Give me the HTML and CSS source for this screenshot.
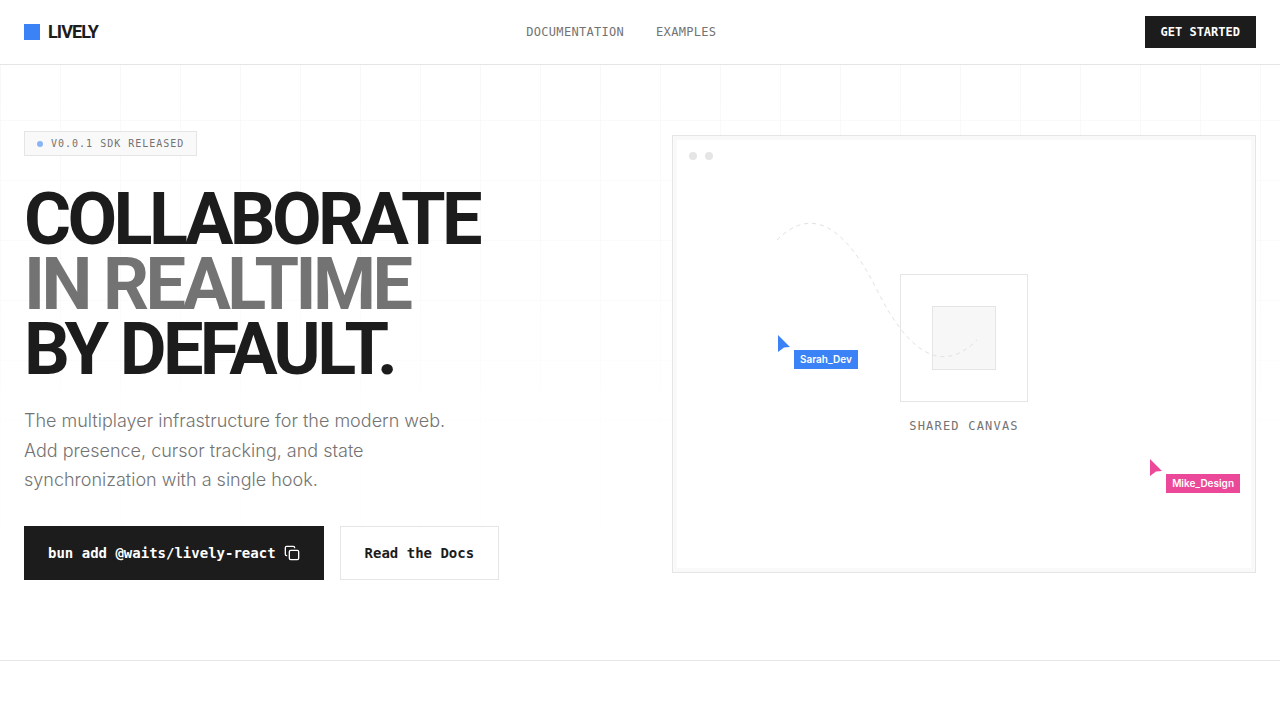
FILE: index.html
```html
<!DOCTYPE html>
<html lang="en">
<head>
<meta charset="utf-8">
<meta name="viewport" content="width=device-width, initial-scale=1">
<title>Lively</title>
<link rel="stylesheet" href="styles.css">
</head>
<body>
<header class="site-header">
  <a class="brand" href="#"><span class="brand-mark"></span>LIVELY</a>
  <nav class="site-nav">
    <a href="#">DOCUMENTATION</a>
    <a href="#">EXAMPLES</a>
  </nav>
  <button class="btn-start" type="button">GET STARTED</button>
</header>
<main>
  <section class="hero">
    <div class="hero-copy">
      <div class="badge"><span class="badge-dot"></span>V0.0.1 SDK RELEASED</div>
      <h1 class="headline">COLLABORATE<br><span class="headline-muted">IN REALTIME</span><br>BY DEFAULT.</h1>
      <p class="lead">The multiplayer infrastructure for the modern web. Add presence, cursor tracking, and state synchronization with a single hook.</p>
      <div class="actions">
        <button class="btn btn-dark" type="button">bun add @waits/lively-react
          <svg class="copy-icon" viewBox="0 0 24 24" aria-hidden="true"><rect x="8" y="8" width="14" height="14" rx="2"/><path d="M4 16c-1.1 0-2-.9-2-2V4c0-1.1.9-2 2-2h10c1.1 0 2 .9 2 2"/></svg>
        </button>
        <a class="btn btn-light" href="#">Read the Docs</a>
      </div>
    </div>
    <div class="demo">
      <div class="demo-canvas">
        <div class="window-dots"><span></span><span></span></div>
        <div class="shape"><div class="shape-core"></div></div>
        <div class="caption">SHARED CANVAS</div>
        <svg class="trail" aria-hidden="true"><path d="M100 100 Q150 50 200 150 T300 200"/></svg>
        <div class="cursor cursor-sarah">
          <svg class="pointer" viewBox="0 0 16 18" aria-hidden="true"><path d="M1 1 L13 13 L7 13.500 L1 18 Z"/></svg>
          <span class="cursor-label">Sarah_Dev</span>
        </div>
        <div class="cursor cursor-mike">
          <svg class="pointer" viewBox="0 0 16 18" aria-hidden="true"><path d="M1 1 L13 13 L7 13.500 L1 18 Z"/></svg>
          <span class="cursor-label">Mike_Design</span>
        </div>
      </div>
    </div>
  </section>
</main>
</body>
</html>
```
FILE: styles.css
```css
:root {
  --ink: #1c1c1c;
  --muted: #737373;
  --line: #e5e5e5;
  --soft: #f9f9f9;
  --blue: #3b82f6;
  --pink: #ec4899;
  --mono: "DejaVu Sans Mono", monospace;
  --sans: Inter, sans-serif;
  --display: Roboto, sans-serif;
}

* {
  box-sizing: border-box;
}

body {
  margin: 0;
  background: #fff;
  color: var(--ink);
  font-family: var(--sans);
}

a {
  color: inherit;
  text-decoration: none;
}

.site-header {
  position: fixed;
  top: 0;
  left: 0;
  right: 0;
  z-index: 10;
  display: flex;
  align-items: center;
  justify-content: space-between;
  padding: 16px 24px;
  background: #fff;
  border-bottom: 1px solid var(--line);
}

.brand {
  display: flex;
  align-items: center;
  gap: 8px;
  font-family: var(--display);
  font-size: 18px;
  line-height: 28px;
  font-weight: 700;
  letter-spacing: -0.05em;
}

.brand-mark {
  width: 16px;
  height: 16px;
  background: var(--blue);
}

.site-nav {
  display: flex;
  gap: 32px;
  font-family: var(--mono);
  font-size: 12px;
  line-height: 16px;
  letter-spacing: 0.025em;
  color: var(--muted);
}

.btn-start {
  padding: 8px 16px;
  border: 0;
  background: var(--ink);
  color: #fff;
  font-family: var(--mono);
  font-size: 12px;
  line-height: 16px;
  font-weight: 700;
}

.hero {
  position: relative;
  display: grid;
  grid-template-columns: 1fr 1fr;
  align-items: center;
  gap: 64px;
  padding: 128px 24px 80px;
  border-bottom: 1px solid var(--line);
}

.hero::before {
  content: "";
  position: absolute;
  inset: 0;
  z-index: -1;
  background-image:
    linear-gradient(to right, #f7f7f7 1px, transparent 1px),
    linear-gradient(to bottom, #f7f7f7 1px, transparent 1px);
  background-size: 60px 60px;
  mask-image: linear-gradient(to bottom, #000, transparent 85%);
}

.badge {
  display: flex;
  align-items: center;
  gap: 8px;
  width: fit-content;
  margin: 3px 0 32px;
  padding: 4px 12px;
  border: 1px solid var(--line);
  background: var(--soft);
  color: var(--muted);
  font-family: var(--mono);
  font-size: 10px;
  line-height: 15px;
  letter-spacing: 0.1em;
}

.badge-dot {
  width: 6px;
  height: 6px;
  border-radius: 50%;
  background: #8ab4f8;
}

.headline {
  margin: 0 0 24px;
  font-family: var(--display);
  font-size: 72px;
  line-height: 0.9;
  font-weight: 700;
  letter-spacing: -0.05em;
}

.headline-muted {
  color: var(--muted);
}

.lead {
  max-width: 448px;
  margin: 0 0 32px;
  color: var(--muted);
  font-size: 18px;
  line-height: 1.625;
  font-weight: 300;
}

.actions {
  display: flex;
  flex-wrap: wrap;
  gap: 16px;
}

.btn {
  display: flex;
  align-items: center;
  gap: 8px;
  padding: 16px 24px;
  border: 1px solid var(--line);
  font-family: var(--mono);
  font-size: 14px;
  line-height: 20px;
  font-weight: 700;
}

.btn-dark {
  padding: 16px 24px;
  border-width: 1px 0;
  border-color: var(--ink);
  background: var(--ink);
  color: #fff;
}

.btn-light {
  background: #fff;
}

.copy-icon {
  width: 16px;
  height: 16px;
  fill: none;
  stroke: currentColor;
  stroke-width: 2;
  stroke-linecap: round;
  stroke-linejoin: round;
}

.demo {
  aspect-ratio: 4 / 3;
  display: flex;
  padding: 4px;
  border: 1px solid var(--line);
  background: var(--soft);
}

.demo-canvas {
  position: relative;
  flex: 1;
  display: flex;
  flex-direction: column;
  align-items: center;
  justify-content: center;
  gap: 16px;
  background: #fff;
}

.window-dots {
  position: absolute;
  top: 12px;
  left: 12px;
  display: flex;
  gap: 8px;
}

.window-dots span {
  width: 8px;
  height: 8px;
  border-radius: 50%;
  background: var(--line);
}

.shape {
  display: grid;
  place-items: center;
  width: 128px;
  height: 128px;
  border: 1px solid var(--line);
}

.shape-core {
  width: 64px;
  height: 64px;
  border: 1px solid var(--line);
  background: #f7f7f7;
}

.caption {
  color: var(--muted);
  font-family: var(--mono);
  font-size: 12px;
  line-height: 16px;
  letter-spacing: 0.1em;
}

.trail {
  position: absolute;
  inset: 0;
  width: 100%;
  height: 100%;
  fill: none;
  stroke: #e0e0e0;
  stroke-dasharray: 4 4;
}

.cursor {
  position: absolute;
  padding: 16px 0 0 17px;
}

.cursor-sarah {
  top: 194px;
  left: 100px;
  color: var(--blue);
}

.cursor-mike {
  top: 318px;
  right: 11px;
  color: var(--pink);
}

.pointer {
  position: absolute;
  top: 0;
  left: 0;
  width: 16px;
  height: 18px;
  fill: currentColor;
}

.cursor-label {
  display: block;
  padding: 2px 6px;
  background: currentColor;
  font-size: 10px;
  line-height: 15px;
  font-weight: 600;
}

.cursor-label::first-line {
  color: #fff;
}
```
